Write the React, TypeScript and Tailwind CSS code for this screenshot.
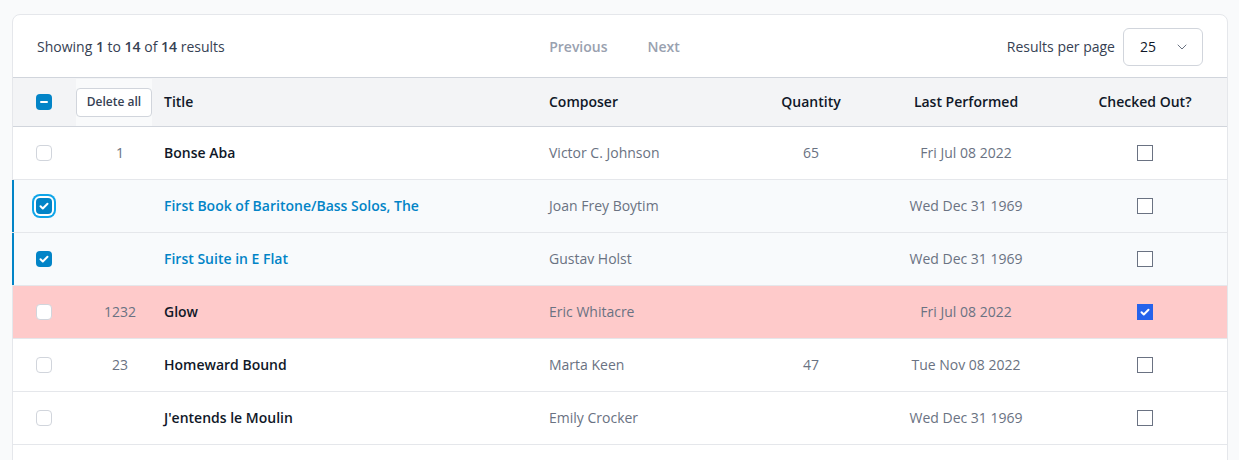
import { ChevronDown } from "lucide-react";

type Row = {
  id: number;
  qtyNo?: string;
  title: string;
  composer: string;
  quantity?: string;
  date: string;
  selected?: boolean;
  focused?: boolean;
  checkedOut?: boolean;
  danger?: boolean;
};

const rows: Row[] = [
  { id: 1, qtyNo: "1", title: "Bonse Aba", composer: "Victor C. Johnson", quantity: "65", date: "Fri Jul 08 2022" },
  { id: 2, title: "First Book of Baritone/Bass Solos, The", composer: "Joan Frey Boytim", date: "Wed Dec 31 1969", selected: true, focused: true },
  { id: 3, title: "First Suite in E Flat", composer: "Gustav Holst", date: "Wed Dec 31 1969", selected: true },
  { id: 4, qtyNo: "1232", title: "Glow", composer: "Eric Whitacre", date: "Fri Jul 08 2022", checkedOut: true, danger: true },
  { id: 5, qtyNo: "23", title: "Homeward Bound", composer: "Marta Keen", quantity: "47", date: "Tue Nov 08 2022" },
  { id: 6, title: "J'entends le Moulin", composer: "Emily Crocker", date: "Wed Dec 31 1969" },
];

function Check({ className }: { className?: string }) {
  return (
    <svg viewBox="0 0 16 16" className={className} fill="none">
      <path d="M4.5 8.2l2.3 2.3 4.7-4.8" stroke="white" strokeWidth="2" strokeLinecap="round" strokeLinejoin="round" />
    </svg>
  );
}

function SelectBox({ checked, focused }: { checked?: boolean; focused?: boolean }) {
  if (checked) {
    return (
      <span
        className={
          "flex h-4 w-4 items-center justify-center rounded-[4px] bg-[#0284c7] " +
          (focused ? "ring-2 ring-[#0ea5e9] ring-offset-2 ring-offset-white" : "")
        }
      >
        <Check className="h-4 w-4" />
      </span>
    );
  }
  return <span className="block h-4 w-4 rounded-[4px] border border-gray-300 bg-white" />;
}

function OutBox({ checked }: { checked?: boolean }) {
  if (checked) {
    return (
      <span className="mx-auto flex h-4 w-4 items-center justify-center bg-[#2563eb]">
        <Check className="h-4 w-4" />
      </span>
    );
  }
  return <span className="mx-auto block h-4 w-4 border border-gray-500 bg-white" />;
}

export default function App() {
  return (
    <div
      className="min-h-screen bg-[#f9fafb] pl-3 pr-[11px] pt-[14px]"
      style={{ fontFamily: "'Open Sans', 'Noto Sans', sans-serif" }}
    >
      <div className="rounded-t-lg border border-gray-200 bg-white pb-10">
        {/* Pagination bar */}
        <div className="grid h-[62px] grid-cols-3 items-center px-6 pt-px">
          <p className="text-sm text-gray-700">
            Showing <span className="font-semibold">1</span> to <span className="font-semibold">14</span> of{" "}
            <span className="font-semibold">14</span> results
          </p>
          <div className="flex justify-center gap-10 pr-[11px] text-sm font-semibold text-gray-400">
            <button>Previous</button>
            <button>Next</button>
          </div>
          <div className="flex items-center justify-end gap-2">
            <span className="text-sm font-medium text-gray-700">Results per page</span>
            <div className="flex h-[38px] w-20 items-center justify-between rounded-md border border-gray-300 pl-4 pr-3 text-sm text-gray-900">
              <span>25</span>
              <ChevronDown className="h-4 w-4 text-gray-500" strokeWidth={1.5} />
            </div>
          </div>
        </div>

        <table className="w-full table-fixed border-collapse text-sm">
          <colgroup>
            <col className="w-[63px]" />
            <col className="w-[88px]" />
            <col className="w-[385px]" />
            <col className="w-[204px]" />
            <col className="w-[116px]" />
            <col className="w-[194px]" />
            <col />
          </colgroup>
          <thead>
            <tr className="h-[49px] border-y border-gray-300 bg-gray-100 text-gray-900">
              <th className="pl-[23px] text-left">
                <span className="flex h-4 w-4 items-center justify-center rounded-[4px] bg-[#0284c7]">
                  <span className="h-[2px] w-2 rounded bg-white" />
                </span>
              </th>
              <th className="p-0">
                <div className="flex h-[47px] w-[76px] items-center bg-gray-50">
                  <button className="h-[29px] w-[76px] rounded border border-gray-300 bg-white text-xs font-semibold text-gray-700">
                    Delete all
                  </button>
                </div>
              </th>
              <th className="text-left font-semibold">Title</th>
              <th className="text-left font-semibold">Composer</th>
              <th className="text-center font-semibold">Quantity</th>
              <th className="text-center font-semibold">Last Performed</th>
              <th className="text-center font-semibold">Checked Out?</th>
            </tr>
          </thead>
          <tbody>
            {rows.map((r) => (
              <tr
                key={r.id}
                className={
                  "h-[53px] border-b border-gray-200 " +
                  (r.danger ? "bg-[#fecaca]" : r.selected ? "bg-[#f8fafc]" : "bg-white")
                }
              >
                <td className="relative pl-[23px]">
                  {r.selected && <span className="absolute -left-px top-0 bottom-0 w-[2px] bg-[#0284c7]" />}
                  <SelectBox checked={r.selected} focused={r.focused} />
                </td>
                <td className="text-center text-gray-500">{r.qtyNo}</td>
                <td className={"font-semibold " + (r.selected ? "text-[#0284c7]" : "text-gray-900")}>{r.title}</td>
                <td className="text-gray-500">{r.composer}</td>
                <td className="text-center text-gray-500">{r.quantity}</td>
                <td className="text-center text-gray-500">{r.date}</td>
                <td>
                  <OutBox checked={r.checkedOut} />
                </td>
              </tr>
            ))}
          </tbody>
        </table>
      </div>
    </div>
  );
}
